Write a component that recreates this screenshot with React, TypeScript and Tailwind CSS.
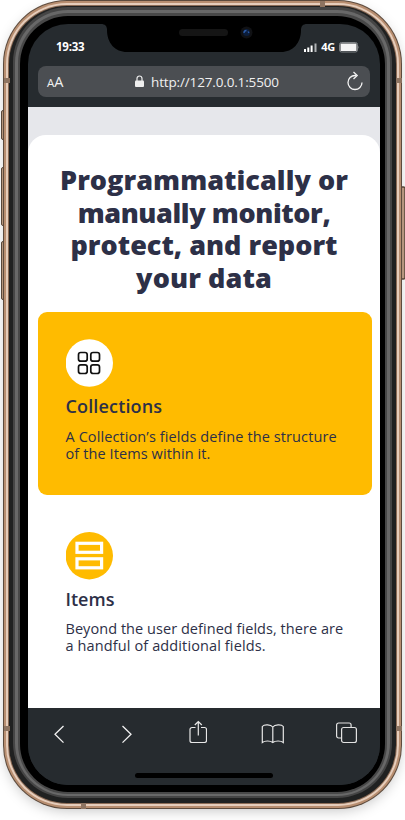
import type { ReactNode } from "react";

function Line({ children, className }: { children: ReactNode; className: string }) {
  return <span className={`block whitespace-nowrap ${className}`}>{children}</span>;
}

function StatusBar() {
  return (
    <div className="relative h-[42px] shrink-0">
      <svg className="absolute left-[73px] top-0" width="206" height="28" viewBox="0 0 206 28">
        <path d="M0 0C4 0 6 2 6 6C6 19 14 28 26 28H180C192 28 200 19 200 6C200 2 202 0 206 0Z" fill="#000" />
        <rect x="78" y="5" width="49" height="7" rx="3.5" fill="#151515" />
        <circle cx="145.500" cy="8.500" r="6" fill="#101114" />
        <circle cx="145.500" cy="8.500" r="3.500" fill="#0b1d3b" />
        <path d="M143 9a2.500 2.500 0 0 1 2.500-2.500M147 7.500l1 1.500" stroke="#2c5ba8" strokeWidth="1.300" fill="none" />
      </svg>
      <div className="flex items-center justify-between pl-[28px] pr-[20px] pt-[14px] text-white">
        <span className="font-['Open_Sans',sans-serif] text-[11.500px] font-bold leading-4 tracking-[-0.250px]">19:33</span>
        <div className="flex items-center">
          <svg className="mt-[1px]" width="14" height="9" viewBox="0 0 14 9" fill="#fff">
            <rect x="0" y="6" width="2" height="3" />
            <rect x="3.300" y="4.500" width="2" height="4.500" />
            <rect x="6.600" y="2.500" width="2" height="6.500" />
            <rect x="10.500" y="0.500" width="2" height="8.500" fill="#aeb1b3" />
          </svg>
          <span className="ml-[3px] mt-[1px] font-['Open_Sans',sans-serif] text-[11px] font-bold leading-4 tracking-[-0.2px]">4G</span>
          <svg className="ml-[4px] mt-[2px]" width="21" height="11" viewBox="0 0 21 11">
            <rect x="0.500" y="0.500" width="18" height="9.500" rx="2" fill="none" stroke="#7d8184" />
            <rect x="1.500" y="1.500" width="16" height="7.500" rx="0.500" fill="#f4f4f4" />
            <path d="M19.300 3.500q1.500 1.700 0 3.500z" fill="#7d8184" />
          </svg>
        </div>
      </div>
    </div>
  );
}

function AddressBar() {
  return (
    <div className="mx-[10px] flex h-[31px] shrink-0 items-center rounded-[8px] bg-[#4b4e52] pl-[9px] pr-[6px] font-['Open_Sans',sans-serif] text-[#f0f0f0]">
      <div className="flex w-[50px] items-baseline pt-[2px] leading-5">
        <span className="text-[11.500px] font-medium">A</span>
        <span className="text-[14.500px] font-medium">A</span>
      </div>
      <svg className="ml-[38px]" width="9" height="13" viewBox="0 0 9 13">
        <path d="M2 6V3.500a2.500 2.500 0 0 1 5 0V6" fill="none" stroke="#eee" strokeWidth="1.200" />
        <rect x="0" y="5.500" width="9" height="6.500" rx="1" fill="#eee" />
      </svg>
      <span className="ml-[7px] w-[140px] whitespace-nowrap text-[13.500px] leading-5 tracking-[-0.150px]">http://127.0.0.1:5500</span>
      <svg className="mb-[2px] ml-auto" width="18" height="20" viewBox="0 0 18 20" fill="none" stroke="#f2f2f2" strokeWidth="1.300">
        <path d="M10 4.500H9a7 7 0 1 0 7 7" />
        <path d="M7.500 1l3.700 3.500L7.500 8" />
      </svg>
    </div>
  );
}

function Toolbar() {
  return (
    <div className="flex h-[77px] shrink-0 flex-col bg-[#262b2f] pl-[25px] pr-[22px] pt-[11px]">
      <div className="flex items-center justify-between">
        <svg width="12" height="28" viewBox="0 0 12 28" fill="none" stroke="#f2f2f2" strokeWidth="1.300">
          <path d="M10.500 7L2 15.300l8.500 8.300" />
        </svg>
        <svg width="12" height="28" viewBox="0 0 12 28" fill="none" stroke="#f2f2f2" strokeWidth="1.300" className="ml-[23px]">
          <path d="M1.500 7L10 15.300l-8.500 8.300" />
        </svg>
        <svg width="18" height="28" viewBox="0 0 18 28" fill="none" stroke="#e8e8e8" strokeWidth="1.200" className="ml-[23px]">
          <path d="M6.500 8.500H3A2 2 0 0 0 1 10.500V21.500a2 2 0 0 0 2 2H15.500a2 2 0 0 0 2-2V10.500a2 2 0 0 0-2-2H12" />
          <path d="M9.300 16.500V3M5.800 6L9.300 2.500L12.800 6" />
        </svg>
        <svg width="24" height="28" viewBox="-0.8 0 24 28" fill="none" stroke="#e8e8e8" strokeWidth="1.200" className="ml-[20px]">
          <path d="M12 8C10 5.500 3.500 5 1.500 7.500V23.500C4 21.500 9.500 21.500 12 23.500C14.500 21.500 20 21.500 22.500 23.500V7.500C20.500 5 14 5.500 12 8V23.500" />
        </svg>
        <svg width="22" height="28" viewBox="0.9 -0.5 22 28" fill="none" stroke="#e2e2e2" strokeWidth="1.200" className="ml-[19px]">
          <path d="M6.500 18.500H3.500a2 2 0 0 1-2-2V5.500a2 2 0 0 1 2-2H14a2 2 0 0 1 2 2V8" />
          <rect x="6.500" y="8" width="14.800" height="15" rx="2" />
        </svg>
      </div>
      <div className="ml-[82px] mt-[26px] h-[5px] w-[138px] rounded-full bg-black" />
    </div>
  );
}

function Page() {
  return (
    <div className="mt-[10px] flex-1 bg-[#e6e7eb] pt-[28px] font-['Open_Sans',sans-serif] text-[#2d3047]">
      <div className="h-full rounded-t-[18px] bg-white px-[10px] pt-[29px]">
        <h1 className="text-center text-[27px] font-extrabold leading-[32.7px]">
          <Line className="tracking-[0.050px]">Programmatically or</Line>
          <Line className="tracking-[-0.400px]">manually monitor,</Line>
          <Line className="tracking-[0px]">protect, and report</Line>
          <Line className="tracking-[0.100px]">your data</Line>
        </h1>
        <section className="mr-[-1.500px] mt-[17px] h-[183px] rounded-[9px] bg-[#ffbb00] px-[27.500px] pt-[27px]">
          <svg width="48" height="48" viewBox="0.4 0 48 48" fill="none" stroke="#111" strokeWidth="1.700">
            <circle cx="23.700" cy="24" r="23.700" fill="#fff" stroke="none" />
            <rect x="12.900" y="13.500" width="8.700" height="8.700" rx="2.300" />
            <rect x="25.200" y="13.500" width="8.700" height="8.700" rx="2.300" />
            <rect x="12.900" y="25.800" width="8.700" height="8.700" rx="2.300" />
            <rect x="25.200" y="25.800" width="8.700" height="8.700" rx="2.300" />
          </svg>
          <h2 className="mt-[7px] text-[18px] font-semibold leading-[25px]">
            <Line className="tracking-[0.150px]">Collections</Line>
          </h2>
          <p className="mt-[9px] text-[14.500px] leading-[17px]">
            <Line className="tracking-[0.100px]">A Collection’s fields define the structure</Line>
            <Line className="tracking-[0.100px]">of the Items within it.</Line>
          </p>
        </section>
        <section className="mt-[9px] px-[27.500px] pt-[28px]">
          <svg width="48" height="48" viewBox="0.4 0 48 48" fill="none" stroke="#fff" strokeWidth="3.200">
            <circle cx="23.700" cy="23.700" r="23.700" fill="#ffbb00" stroke="none" />
            <rect x="11.400" y="11.300" width="24.600" height="9" />
            <rect x="11.400" y="26.800" width="24.600" height="9" />
          </svg>
          <h2 className="mt-[7px] text-[18px] font-semibold leading-[25px]">
            <Line className="tracking-[0px]">Items</Line>
          </h2>
          <p className="mt-[8px] text-[14.500px] leading-[17px]">
            <Line className="tracking-[0.050px]">Beyond the user defined fields, there are</Line>
            <Line className="tracking-[0.120px]">a handful of additional fields.</Line>
          </p>
        </section>
      </div>
    </div>
  );
}

export default function App() {
  return (
    <div className="relative h-[820px] w-[405px] overflow-hidden bg-white">
      <svg className="absolute inset-0" width="405" height="820" viewBox="0 0 405 820" fill="#c4a188" stroke="#5d4b3d">
        <rect x="1.500" y="110.500" width="6" height="29" rx="1.500" />
        <rect x="1.500" y="167.500" width="6" height="58" rx="1.500" />
        <rect x="1.500" y="241.500" width="6" height="58" rx="1.500" />
        <rect x="397" y="187" width="8" height="92" rx="1.500" strokeWidth="1.500" />
      </svg>
      <div className="relative ml-[3px] h-[809px] w-[399px] rounded-[64px] bg-[#5d4b3d] p-[1px] shadow-[0_4px_14px_-3px_rgba(0,0,0,0.25)]">
        <div className="h-full rounded-[63px] bg-[#b88e70] p-[2px]">
          <div className="h-full rounded-[61px] bg-[#e6cdbb] p-[2px]">
            <div className="h-full rounded-[59px] bg-[#8b6b55] p-[1px]">
              <div className="h-full rounded-[58px] bg-[#202121] px-[4px] pb-[5px] pt-[1px]">
                <div className="h-full rounded-[55px] bg-[#454545] px-[2px] pb-[2px] pt-[3px]">
                  <div className="h-full rounded-[53px] bg-[#686868] px-[3px] pb-[2px] pt-[3px]">
                    <div className="h-full rounded-[50px] bg-[#484848] px-[2px] pb-[2px] pt-[3px]">
                      <div className="h-full rounded-[48px] bg-black pb-[7px] pl-[8px] pr-[5px] pt-[8px]">
                        <div className="flex h-full flex-col overflow-hidden rounded-[40px] bg-[#262b2f]">
                          <StatusBar />
                          <AddressBar />
                          <Page />
                          <Toolbar />
                        </div>
                      </div>
                    </div>
                  </div>
                </div>
              </div>
            </div>
          </div>
        </div>
      </div>
      <svg className="pointer-events-none absolute inset-0" width="405" height="820" viewBox="0 0 405 820" fill="#8e7461">
        <rect x="320" y="1" width="5" height="6" />
        <rect x="4" y="78" width="6" height="5" />
        <rect x="396" y="78" width="6" height="5" />
        <rect x="4" y="726" width="6" height="5" />
        <rect x="396" y="726" width="6" height="5" />
        <rect x="81" y="803" width="5" height="6" />
      </svg>
    </div>
  );
}
